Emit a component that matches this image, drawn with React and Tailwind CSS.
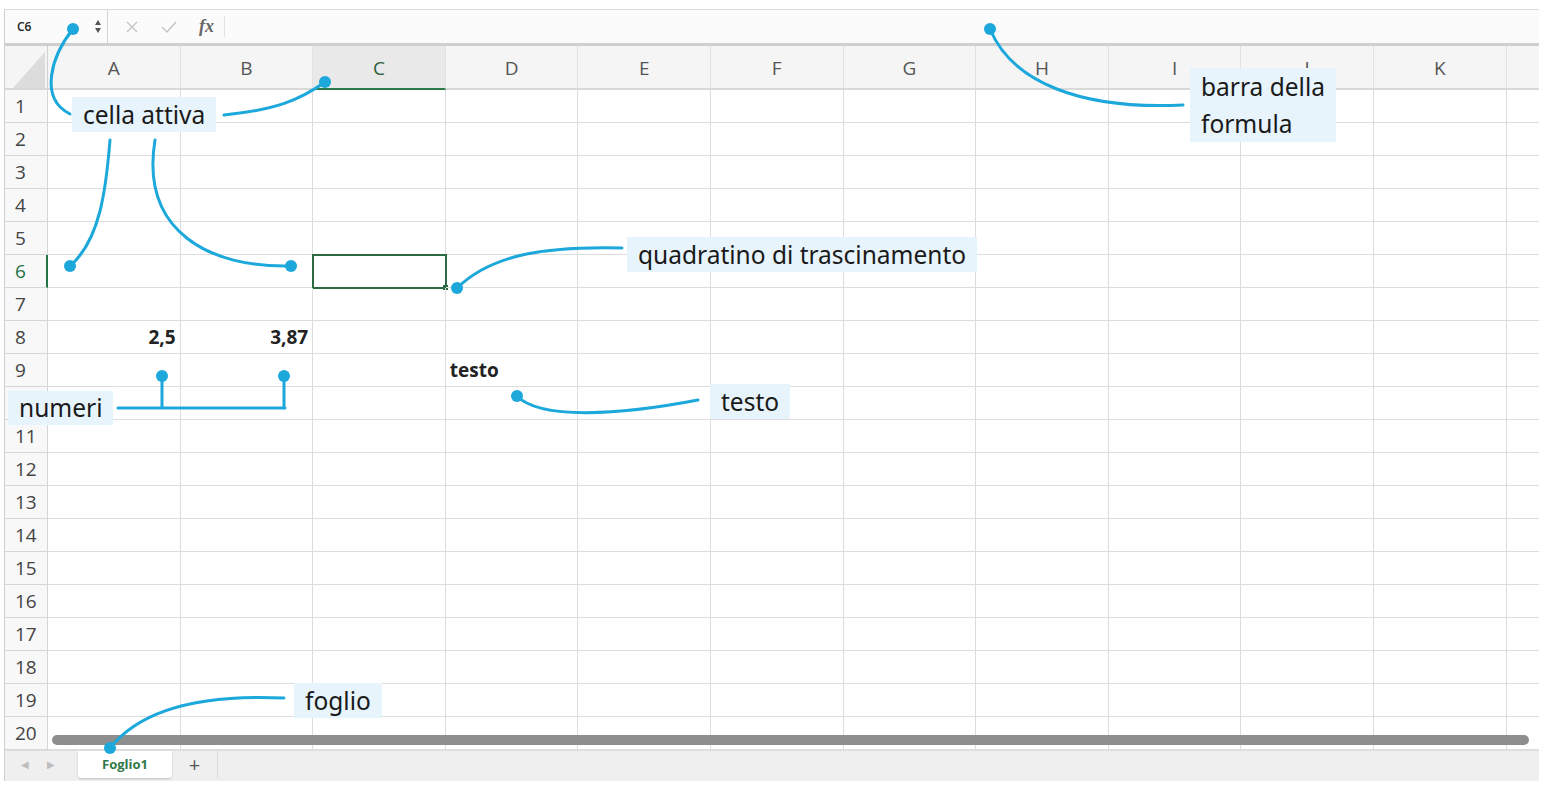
import React from 'react';

const COLS = ['A', 'B', 'C', 'D', 'E', 'F', 'G', 'H', 'I', 'J', 'K'];
const ROWS = Array.from({ length: 20 }, (_, i) => i + 1);

const DATA = {
  'A8': { text: '2,5', align: 'right' },
  'B8': { text: '3,87', align: 'right' },
  'D9': { text: 'testo', align: 'left' },
};

const BLUE = '#1ca8db';

function FormulaBar() {
  return (
    <div className="flex h-[37px] border-t border-[#dcdcdc] border-b-[3px] border-b-[#cfcfcf] bg-[#fbfbfb]">
      <div className="flex items-center w-[103px] border-r border-[#d6d6d6] pl-[12px] pr-[6px]">
        <span className="text-[12px] text-[#222] font-semibold">C6</span>
        <div className="ml-auto flex flex-col items-center gap-[3px]">
          <span className="block w-0 h-0 border-l-[3px] border-r-[3px] border-b-[5px] border-l-transparent border-r-transparent border-b-[#555]" />
          <span className="block w-0 h-0 border-l-[3px] border-r-[3px] border-t-[5px] border-l-transparent border-r-transparent border-t-[#555]" />
        </div>
      </div>
      <div className="flex items-center gap-[22px] pl-[17px] pr-[10px] border-r border-[#e2e2e2] my-[6px]">
        <svg width="14" height="14" viewBox="0 0 14 14" stroke="#c4c4c4" strokeWidth="1.4" fill="none"><path d="M2 2 L12 12 M12 2 L2 12" /></svg>
        <svg width="16" height="14" viewBox="0 0 16 14" stroke="#c4c4c4" strokeWidth="1.4" fill="none"><path d="M1 7 L6 12 L15 2" /></svg>
        <span className="text-[18px] italic font-bold text-[#666]" style={{ fontFamily: 'Liberation Serif, serif' }}>fx</span>
      </div>
      <div className="flex-1" />
    </div>
  );
}

function HeaderRow() {
  return (
    <div className="flex h-[44px] bg-[#f5f5f5] border-b-2 border-[#d8d8d8]">
      <div className="w-[43px] shrink-0 border-r border-[#d0d0d0] relative overflow-hidden">
        <svg className="absolute left-[8px] top-[6px]" width="32" height="36" viewBox="0 0 32 36">
          <path d="M32 0 L32 36 L0 36 Z" fill="#dcdcdc" />
        </svg>
      </div>
      {COLS.map((c) => (
        <div
          key={c}
          className={`w-[132.6px] shrink-0 flex items-center justify-center pt-[3px] border-r border-[#e2e2e2] text-[19px] ${
            c === 'C' ? 'bg-[#e9e9e9] text-[#2f5e3e] border-b-2 border-b-[#2f7a4a] -mb-[2px]' : 'text-[#555]'
          }`}
        >
          {c}
        </div>
      ))}
      <div className="flex-1" />
    </div>
  );
}

function Row({ n }) {
  // row 10's number sits under the "numeri" callout
  return (
    <div className="flex h-[33px]">
      <div
        className={`w-[43px] shrink-0 flex items-center pl-[10px] text-[19px] bg-[#f8f8f8] border-r border-b border-[#d6d6d6] ${
          n === 6 ? 'text-[#217346] border-r-2 border-r-[#217346]' : 'text-[#444]'
        }`}
      >
        {n === 10 ? null : n}
      </div>
      {COLS.map((c) => {
        const d = DATA[c + n];
        const sel = c === 'C' && n === 6;
        return (
          <div
            key={c}
            className={`w-[132.6px] shrink-0 relative flex items-center border-r border-b border-[#dddddd] px-[4px] text-[19px] font-bold text-[#222] ${
              d && d.align === 'right' ? 'justify-end' : 'justify-start'
            } ${sel ? 'outline-2 outline-[#2d6a43] -outline-offset-1' : ''}`}
          >
            {d ? d.text : null}
            {sel && <span className="absolute -right-[3px] -bottom-[3px] w-[5px] h-[5px] bg-[#2d6a43]" />}
          </div>
        );
      })}
      <div className="flex-1 border-b border-[#dddddd]" />
    </div>
  );
}

function TabBar() {
  return (
    <div className="flex h-[31px] bg-[#efefef] border-t border-[#dedede] items-start">
      <div className="flex items-center gap-[18px] pl-[16px] w-[73px] h-[27px] text-[10px] text-[#bdbdbd]">
        <span>◀</span>
        <span>▶</span>
      </div>
      <div className="w-[94px] h-[27px] bg-white rounded-b-[3px] shadow-[0_1px_2px_rgba(0,0,0,0.2)] flex items-center justify-center text-[13px] font-bold text-[#2f7a4a]">
        Foglio1
      </div>
      <div className="w-[46px] h-[27px] flex items-center justify-center text-[20px] text-[#555] border-r border-[#d8d8d8]">+</div>
      <div className="flex-1" />
    </div>
  );
}

function Label({ className, children }) {
  return (
    <div
      className={`absolute bg-[#e7f4fb] text-[#1a1a1a] text-[24.5px] px-[11px] ${className}`}
      style={{ fontFamily: 'Noto Sans, sans-serif' }}
    >
      {children}
    </div>
  );
}

function Dot({ x, y }) {
  return <circle cx={x} cy={y} r="6" fill={BLUE} />;
}

function Annotations() {
  return (
    <>
      <svg className="absolute left-0 top-0 pointer-events-none" width="1550" height="787" viewBox="0 0 1550 787" fill="none" stroke={BLUE} strokeWidth="3" strokeLinecap="round">
        <path d="M73 29 C52 55 38 98 70 114" />
        <path d="M224 115 C275 110 300 100 325 82" />
        <path d="M110 140 C106 190 100 240 70 266" />
        <path d="M155 140 C140 232 210 268 291 266" />
        <path d="M990 29 C1012 82 1080 110 1183 105" />
        <path d="M457 288 C490 256 540 246 622 248" />
        <path d="M517 396 C540 420 620 415 698 400" />
        <path d="M118 408 L285 408 M162 376 L162 408 M284 376 L284 408" />
        <path d="M284 698 C200 694 140 710 110 748" />
        <g stroke="none">
          <Dot x={73} y={29} />
          <Dot x={325} y={82} />
          <Dot x={70} y={266} />
          <Dot x={291} y={266} />
          <Dot x={990} y={29} />
          <Dot x={457} y={288} />
          <Dot x={517} y={396} />
          <Dot x={162} y={376} />
          <Dot x={284} y={376} />
          <Dot x={110} y={748} />
        </g>
      </svg>
      <Label className="left-[72px] top-[97px] leading-[35px]">cella attiva</Label>
      <Label className="left-[1190px] top-[68px] leading-[37px]">barra della<br />formula</Label>
      <Label className="left-[627px] top-[237px] leading-[35px]">quadratino di trascinamento</Label>
      <Label className="left-[8px] top-[391px] leading-[34px]">numeri</Label>
      <Label className="left-[710px] top-[384px] leading-[35px]">testo</Label>
      <Label className="left-[294px] top-[683px] leading-[35px]">foglio</Label>
    </>
  );
}

export default function App() {
  return (
    <div className="relative w-[1550px] h-[787px] bg-white overflow-hidden" style={{ fontFamily: 'Open Sans, sans-serif' }}>
      <div className="ml-[4px] mt-[9px] w-[1535px] border-l border-[#cfcfcf]">
        <FormulaBar />
        <HeaderRow />
        <div className="relative">
          {ROWS.map((n) => (
            <Row key={n} n={n} />
          ))}
          <div className="absolute left-[47px] right-[10px] bottom-[5px] h-[10px] rounded-full bg-[#8e8e8e]" />
        </div>
        <TabBar />
      </div>
      <Annotations />
    </div>
  );
}
